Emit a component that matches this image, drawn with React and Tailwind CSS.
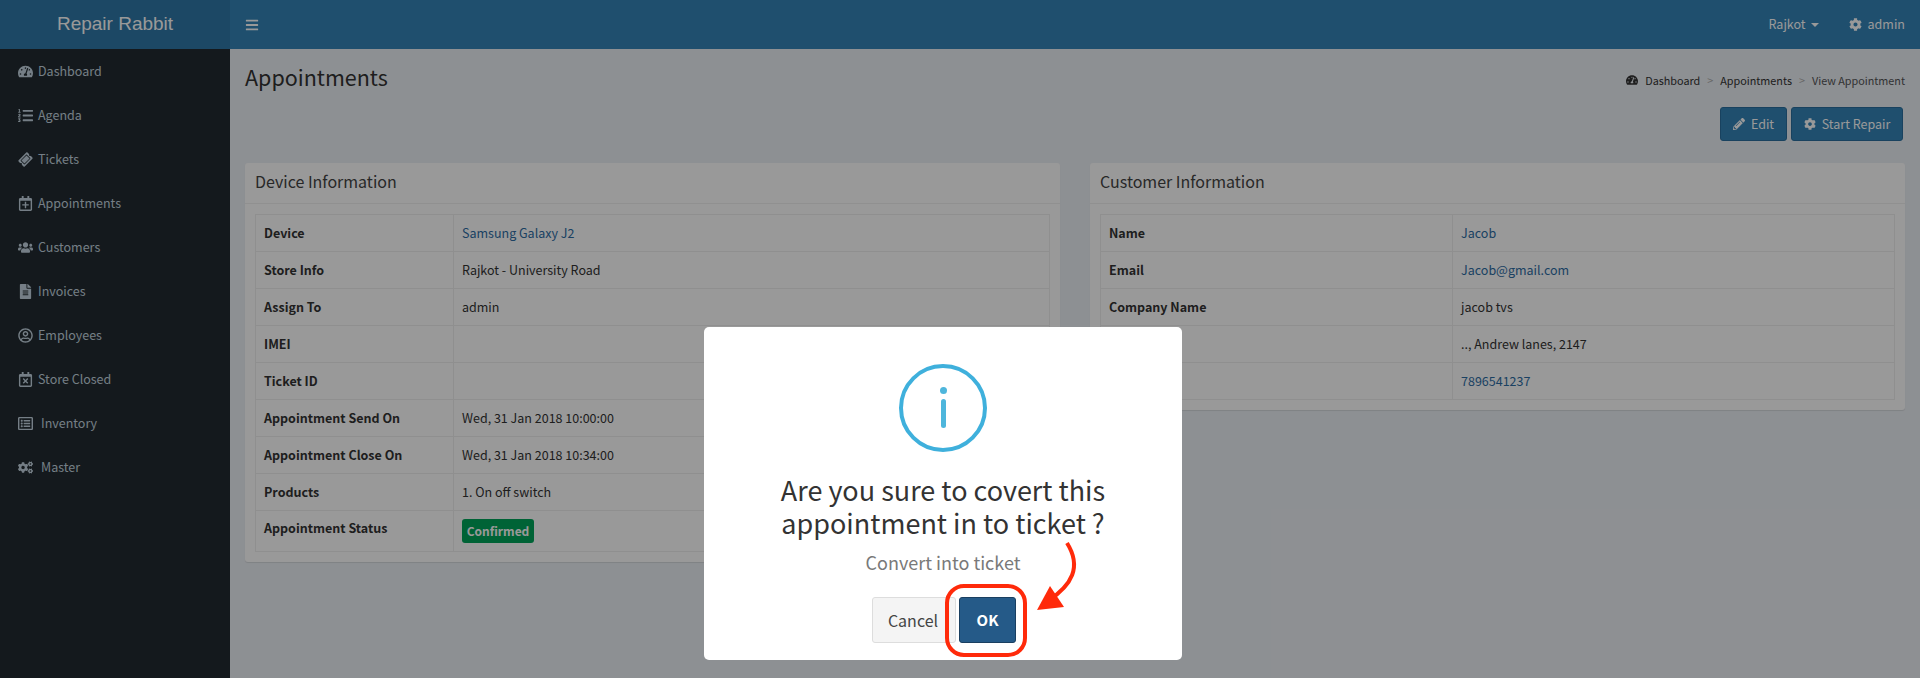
import React from "react";
import {
  FaBars,
  FaCog,
  FaCogs,
  FaFileAlt,
  FaListOl,
  FaPencilAlt,
  FaRegCalendarPlus,
  FaRegCalendarTimes,
  FaRegListAlt,
  FaRegUserCircle,
  FaTachometerAlt,
  FaTicketAlt,
  FaUsers,
} from "react-icons/fa";

const menu = [
  { label: "Dashboard", icon: FaTachometerAlt },
  { label: "Agenda", icon: FaListOl },
  { label: "Tickets", icon: FaTicketAlt, tilt: true },
  { label: "Appointments", icon: FaRegCalendarPlus },
  { label: "Customers", icon: FaUsers },
  { label: "Invoices", icon: FaFileAlt },
  { label: "Employees", icon: FaRegUserCircle },
  { label: "Store Closed", icon: FaRegCalendarTimes },
  { label: "Inventory", icon: FaRegListAlt, wide: true },
  { label: "Master", icon: FaCogs, wide: true },
];

const deviceRows = [
  { name: "Device", value: "Samsung Galaxy J2", link: true },
  { name: "Store Info", value: "Rajkot - University Road" },
  { name: "Assign To", value: "admin" },
  { name: "IMEI", value: "" },
  { name: "Ticket ID", value: "" },
  { name: "Appointment Send On", value: "Wed, 31 Jan 2018 10:00:00" },
  { name: "Appointment Close On", value: "Wed, 31 Jan 2018 10:34:00" },
  { name: "Products", value: "1. On off switch" },
  { name: "Appointment Status", badge: "Confirmed" },
];

const customerRows = [
  { name: "Name", value: "Jacob", link: true },
  { name: "Email", value: "Jacob@gmail.com", link: true },
  { name: "Company Name", value: "jacob tvs" },
  { name: "Address", value: ".., Andrew lanes, 2147" },
  { name: "Phone", value: "7896541237", link: true },
];

const Panel = ({ title, rows, firstCol }) => (
  <div className="w-[815px] self-start rounded-[3px] bg-white shadow-[0_1px_1px_rgba(0,0,0,0.1)]">
    <div className="flex h-[41px] items-center border-b border-[#f0f0f0] px-[10px] pb-[4px] text-base leading-5 text-[#444]">
      {title}
    </div>
    <div className="p-[10px]">
      <table className="w-full table-fixed border-collapse border border-[#f0f0f0] text-[12.5px] leading-5">
        <colgroup>
          <col className={firstCol} />
          <col />
        </colgroup>
        <tbody>
          {rows.map((row) =>
            row.badge ? (
              <tr key={row.name}>
                <td className="h-[41px] border border-[#eee] px-[8px] pt-[7px] align-top font-bold text-[#333]">{row.name}</td>
                <td className="border border-[#eee] px-[8px] pt-[8px] align-top">
                  <span className="block h-6 w-[72px] rounded-[3px] bg-[#00a65a] text-center text-xs leading-6 font-bold text-white">
                    {row.badge}
                  </span>
                </td>
              </tr>
            ) : (
              <tr key={row.name}>
                <td className="h-[37px] border border-[#eee] px-[8px] align-middle font-bold text-[#333]">{row.name}</td>
                <td className={`border border-[#eee] px-[8px] ${row.link ? "text-[#2e6da4]" : "text-[#333]"}`}>{row.value}</td>
              </tr>
            )
          )}
        </tbody>
      </table>
    </div>
  </div>
);

export default function App() {
  return (
    <div className="relative flex h-[678px] w-full flex-col overflow-hidden bg-[#ecf0f5] font-['Noto_Sans_CJK_SC','Source_Sans_Pro',sans-serif] text-[12.5px]">
      <header className="flex h-[49px] shrink-0 bg-[#3484b8] text-white">
        <div className="flex w-[230px] items-center justify-center bg-[#2f78a9] font-['Liberation_Sans',sans-serif] text-[19px]">
          Repair Rabbit
        </div>
        <div className="flex flex-1 items-center justify-between px-[15px]">
          <FaBars className="text-[14px]" />
          <div className="flex items-center">
            <span>Rajkot</span>
            <span className="ml-[5px] h-0 w-0 border-x-4 border-t-4 border-x-transparent border-t-white" />
            <FaCog className="mr-[6px] ml-[30px] text-[13px]" />
            <span>admin</span>
          </div>
        </div>
      </header>

      <div className="flex flex-1">
        <aside className="w-[230px] shrink-0 bg-[#222b31] text-[#c3d3df]">
          {menu.map(({ label, icon: Icon, wide, tilt }) => (
            <div key={label} className="flex h-11 items-center pl-[18px]">
              <span className="flex w-[14px] items-center justify-center">
                <Icon className={`shrink-0 ${tilt ? "-rotate-45 text-[13px]" : "text-[15px]"}`} />
              </span>
              <span className={wide ? "ml-[9px]" : "ml-[6px]"}>{label}</span>
            </div>
          ))}
        </aside>

        <main className="flex-1 px-[15px] pt-[10px]">
          <div className="flex items-start justify-between">
            <h1 className="mt-[2px] text-[21.5px] leading-8 text-[#333]">Appointments</h1>
            <div className="mt-[13px] flex items-center gap-[7px] text-[10.8px] leading-4 text-[#333]">
              <FaTachometerAlt className="text-xs" />
              <span>Dashboard</span>
              <span className="text-[#aaa]">&gt;</span>
              <span>Appointments</span>
              <span className="text-[#aaa]">&gt;</span>
              <span className="text-[#555]">View Appointment</span>
            </div>
          </div>
          <div className="mt-[14px] flex justify-end gap-[4px] pr-[2px]">
            <button className="flex h-[34px] w-[67px] items-center justify-center gap-[6px] rounded-[3px] border border-[#2a6f9e] bg-[#3484b8] text-white">
              <FaPencilAlt className="text-xs" /> Edit
            </button>
            <button className="flex h-[34px] w-[112px] items-center justify-center gap-[6px] rounded-[3px] border border-[#2a6f9e] bg-[#3484b8] text-white">
              <FaCog className="text-xs" /> Start Repair
            </button>
          </div>
          <div className="mt-[22px] flex justify-between">
            <Panel title="Device Information" rows={deviceRows} firstCol="w-[198px]" />
            <Panel title="Customer Information" rows={customerRows} firstCol="w-[352px]" />
          </div>
        </main>
      </div>

      {/* dimmed backdrop + confirm dialog */}
      <div className="absolute inset-0 flex items-end justify-center bg-black/40 pr-[34px] pb-[18px]">
        <div className="relative flex h-[333px] w-[478px] flex-col items-center rounded-[5px] bg-white pt-[37px]">
          <div className="flex h-[88px] w-[88px] flex-col items-center rounded-full border-4 border-[#3fb0dc]">
            <span className="mt-[19px] h-[7px] w-[7px] rounded-full bg-[#4eb6dc]" />
            <span className="mt-[5px] h-[29px] w-[5px] rounded-full bg-[#4eb6dc]" />
          </div>
          <h2 className="mt-[21px] w-[400px] text-center text-[27px] leading-[33px] text-[#333]">
            Are you sure to covert this appointment in to ticket ?
          </h2>
          <p className="mt-[11px] text-lg leading-6 text-[#797979]">Convert into ticket</p>
          <div className="mt-[23px] flex gap-[3px] pl-[2px]">
            <button className="h-[46px] w-[84px] rounded-[3px] border border-[#ddd] bg-[#f4f4f4] pr-[2px] text-base text-[#444]">
              Cancel
            </button>
            <button className="h-[46px] w-[57px] rounded-[3px] border border-[#1a3f60] bg-[#255a88] text-[15px] font-bold text-white">
              OK
            </button>
          </div>
          {/* red annotation over the OK button */}
          <svg className="absolute top-[210px] left-[236px] h-[125px] w-[140px]" viewBox="0 0 140 125" fill="none">
            <rect x="7" y="49" width="78" height="69" rx="17" stroke="#ff2a0a" strokeWidth="4" />
            <path d="M127 6 C 142 30 132 48 108 64" stroke="#ff2a0a" strokeWidth="4" />
            <path d="M97 73 L110 49 L124 70 Z" fill="#ff2a0a" />
          </svg>
        </div>
      </div>
    </div>
  );
}
